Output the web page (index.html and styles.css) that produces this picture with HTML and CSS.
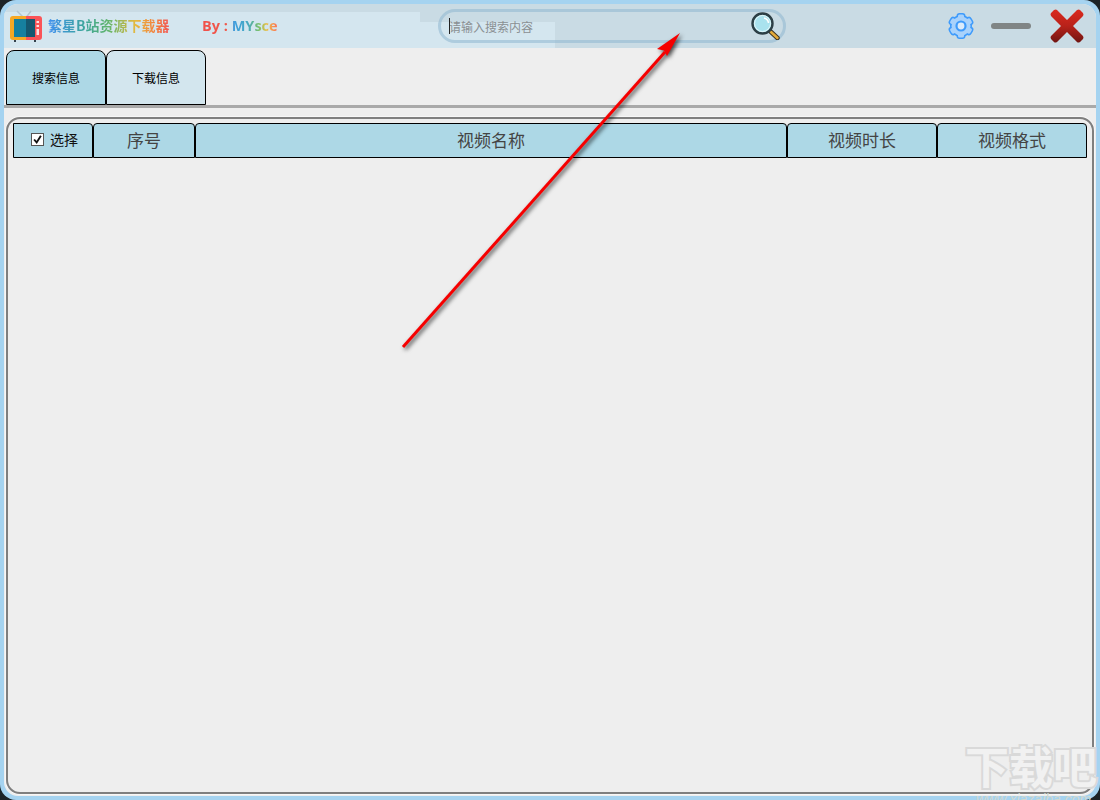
FILE: index.html
```html
<!DOCTYPE html>
<html lang="zh-CN">
<head>
<meta charset="utf-8">
<title>繁星B站资源下载器</title>
<link rel="stylesheet" href="styles.css">
</head>
<body>
<div class="window">
  <div class="app">
    <header class="topbar">
      <svg class="logo" viewBox="0 0 32 26" width="32" height="26" aria-hidden="true">
        <path d="M15 3 L7 -5 M15 3 L21 -5" stroke="#b4c6d0" stroke-width="1.500" fill="none"/>
        <rect x="4" y="23" width="2" height="3" fill="#33424c"/>
        <rect x="24" y="23" width="2" height="3" fill="#33424c"/>
        <path d="M16 0 H3 Q0 0 0 3 V21 Q0 24 3 24 H16 Z" fill="#f7a823"/>
        <path d="M16 0 H29 Q32 0 32 3 V21 Q32 24 29 24 H16 Z" fill="#fb5458"/>
        <rect x="4" y="3" width="12" height="18" fill="#16809f"/>
        <rect x="16" y="3" width="9" height="18" fill="#155870"/>
        <rect x="26.500" y="5" width="2.500" height="2" fill="#fde0e0"/>
        <rect x="26.500" y="9" width="2.500" height="2" fill="#fde0e0"/>
        <rect x="26.500" y="13" width="2.500" height="6" fill="#fde0e0"/>
      </svg>
      <div class="app-title">繁星B站资源下载器</div>
      <div class="author">By : MYsce</div>
      <div class="search">
        <input class="search-input" type="text" placeholder="请输入搜索内容">
        <svg class="search-icon" viewBox="0 0 29 28" width="29" height="28" aria-hidden="true">
          <path d="M19 19 L26.500 26" stroke="#3b3325" stroke-width="4.500" stroke-linecap="round"/>
          <path d="M20 20 L26.500 26" stroke="#e3a93a" stroke-width="2.500" stroke-linecap="round"/>
          <circle cx="11.500" cy="11.500" r="10" fill="#a9e2ee" stroke="#2d3f46" stroke-width="2.400"/>
          <circle cx="11.500" cy="11.500" r="8" fill="none" stroke="#e6f8fb" stroke-width="1"/>
          <path d="M13 6 Q17 7 17.500 11" stroke="#fff" stroke-width="1.500" fill="none"/>
        </svg>
      </div>
      <svg class="gear" viewBox="0 0 28 28" width="28" height="28" aria-hidden="true">
        <defs>
          <g id="gear-shape">
            <circle cx="14" cy="14" r="9.500"/>
            <rect x="11" y="2.500" width="6" height="23" rx="1.500"/>
            <rect x="11" y="2.500" width="6" height="23" rx="1.500" transform="rotate(60 14 14)"/>
            <rect x="11" y="2.500" width="6" height="23" rx="1.500" transform="rotate(120 14 14)"/>
          </g>
        </defs>
        <use href="#gear-shape" fill="#3f9bfb" stroke="#3f9bfb" stroke-width="3"/>
        <use href="#gear-shape" fill="#a9d2fb"/>
        <circle cx="14" cy="14" r="4.500" fill="#dcebfa" stroke="#3f9bfb" stroke-width="2.200"/>
      </svg>
      <div class="minimize"></div>
      <svg class="close" viewBox="0 0 34 34" width="34" height="34" aria-hidden="true">
        <defs>
          <linearGradient id="close-red" gradientUnits="userSpaceOnUse" x1="0" y1="0" x2="0" y2="34">
            <stop offset="0" stop-color="#dc2a1e"/>
            <stop offset="0.5" stop-color="#b8221a"/>
            <stop offset="1" stop-color="#6e1512"/>
          </linearGradient>
        </defs>
        <path d="M7 1 L17 11 L27 1 Q29 0 30 1 L33 4 Q34 6 33 7 L23 17 L33 27 Q34 29 33 30 L30 33 Q28 34 27 33 L17 23 L7 33 Q5 34 4 33 L1 30 Q0 28 1 27 L11 17 L1 7 Q0 5 1 4 L4 1 Q6 0 7 1 Z" fill="url(#close-red)"/>
      </svg>
    </header>

    <nav class="tabs">
      <div class="tab tab-active">搜索信息</div>
      <div class="tab">下载信息</div>
    </nav>
    <div class="divider"></div>

    <main class="panel">
      <div class="table-head">
        <div class="cell cell-check">
          <span class="checkbox">
            <svg viewBox="0 0 13 13" width="11" height="11" aria-hidden="true"><path d="M2.500 6.500 L5.500 10 L10.500 2" fill="none" stroke="#111" stroke-width="2.200"/></svg>
          </span>
          <span class="check-label">选择</span>
        </div>
        <div class="cell cell-index">序号</div>
        <div class="cell cell-name">视频名称</div>
        <div class="cell cell-time">视频时长</div>
        <div class="cell cell-format">视频格式</div>
      </div>
    </main>
  </div>
</div>

<svg class="arrow" viewBox="0 0 1100 800" width="1100" height="800" aria-hidden="true">
  <path d="M403 347 L665 52" stroke="#f60000" stroke-width="3" fill="none"/>
  <path d="M680 33 L657 49 L664 50.500 L667 56 Z" fill="#f60000"/>
</svg>

<div class="watermark">
  <div class="wm-main">下载吧</div>
  <div class="wm-url">www.xiazaiba.com</div>
</div>
</body>
</html>
```

FILE: styles.css
```css
* { box-sizing: border-box; }

html, body {
  margin: 0;
  height: 100%;
}

body {
  position: relative;
  overflow: hidden;
  background: #1c2327;
  font-family: "Noto Sans CJK SC", "Microsoft YaHei", sans-serif;
}

.window {
  height: 800px;
  padding: 4px;
  background: #a5d3f0;
  border-radius: 16px;
}

.app {
  display: flex;
  flex-direction: column;
  height: 100%;
  background: #eee;
  border-radius: 14px;
  overflow: hidden;
}

/* Top bar */
.topbar {
  display: flex;
  align-items: center;
  flex: none;
  height: 44px;
  background:
    linear-gradient(#d4e6ef, #d4e6ef) 0 18px / 551px 26px no-repeat,
    linear-gradient(#d4e6ef, #d4e6ef) 0 8px / 416px 36px no-repeat,
    #c9dbe4;
}

.logo {
  flex: none;
  margin-left: 6px;
  margin-top: 6px;
  overflow: visible;
}

.app-title {
  flex: none;
  width: 122px;
  margin-left: 6px;
  margin-top: -2px;
  font-size: 14px;
  font-weight: 700;
  line-height: 20px;
  white-space: nowrap;
  color: transparent;
  background: linear-gradient(90deg, #3f8ff0 0%, #3ba59b 30%, #63b56a 50%, #e7b93f 72%, #f5773d 90%, #f0555a 100%);
  -webkit-background-clip: text;
  background-clip: text;
}

.author {
  flex: none;
  width: 76px;
  margin-left: 32px;
  font-family: "Open Sans", "Noto Sans", sans-serif;
  font-size: 14.500px;
  font-weight: 700;
  line-height: 20px;
  white-space: nowrap;
  color: transparent;
  background: linear-gradient(90deg, #f0504a 0%, #ef5a4a 36%, #3f9fe0 42%, #45a8c0 60%, #7cc06a 75%, #e9c04a 85%, #f98a50 95%, #f96a60 100%);
  -webkit-background-clip: text;
  background-clip: text;
}

.search {
  position: relative;
  display: flex;
  align-items: center;
  flex: none;
  width: 348px;
  height: 34px;
  margin-left: 160px;
  padding: 0 3px 0 8px;
  border: 3px solid rgba(142, 183, 208, 0.55);
  border-radius: 17px;
}

.search::before {
  content: "";
  position: absolute;
  left: 8px;
  top: 6px;
  width: 1px;
  height: 16px;
  background: #222;
}

.search-input {
  flex: 1;
  min-width: 0;
  padding: 0;
  border: 0;
  outline: 0;
  background: transparent;
  font-family: inherit;
  font-size: 12px;
  color: #333;
}

.search-input::placeholder {
  color: #8a8f92;
  opacity: 1;
}

.search-icon {
  flex: none;
}

.gear {
  flex: none;
  margin-left: 161px;
}

.minimize {
  flex: none;
  width: 40px;
  height: 6px;
  margin-left: 16px;
  background: #808585;
  border-radius: 3px;
}

.close {
  flex: none;
  margin-left: 19px;
  margin-top: -1px;
}

/* Tabs */
.tabs {
  display: flex;
  flex: none;
  height: 55px;
  margin-top: 2px;
  padding-left: 2px;
}

.tab {
  display: flex;
  align-items: center;
  justify-content: center;
  width: 100px;
  padding-bottom: 1px;
  border: 1px solid #000;
  border-radius: 8px 8px 0 0;
  background: #d3e6ee;
  font-size: 12px;
  color: #000;
}

.tab-active {
  background: #add8e6;
}

.divider {
  flex: none;
  height: 3px;
  background: #a9a9a9;
}

/* Table panel */
.panel {
  flex: 1;
  margin: 9px 2px 2px;
  padding: 4px 5px;
  border: 2px solid #7f7f7f;
  border-radius: 14px;
  box-shadow: 0 0 0 1px #f7f7f7;
}

.table-head {
  display: flex;
  height: 35px;
}

.cell {
  display: flex;
  align-items: center;
  justify-content: center;
  flex: none;
  padding-bottom: 2px;
  border: 1px solid #000;
  border-radius: 4px 4px 0 0;
  background: #add8e6;
  font-size: 17px;
  color: #444;
}

.cell-check {
  width: 80px;
  border-top-left-radius: 0;
  padding: 0 14px 3px 17px;
  justify-content: flex-start;
}

.cell-index { width: 102px; }
.cell-name  { width: 592px; }
.cell-time  { width: 150px; }
.cell-format { width: 150px; }

.checkbox {
  display: flex;
  align-items: center;
  justify-content: center;
  flex: none;
  width: 13px;
  height: 13px;
  border: 1px solid #555;
  background: #fff;
}

.check-label {
  margin-left: 6px;
  font-size: 14px;
  color: #111;
  white-space: nowrap;
}

/* Annotation over the window */
.arrow {
  position: absolute;
  left: 0;
  top: 0;
  pointer-events: none;
  filter: drop-shadow(2px 2px 2px rgba(0, 0, 0, 0.7));
}

/* Corner watermark */
.watermark {
  position: absolute;
  left: 965px;
  top: 741px;
  width: 135px;
  pointer-events: none;
}

.wm-main {
  height: 50px;
  font-size: 44px;
  font-weight: 700;
  line-height: 48px;
  white-space: nowrap;
  color: #f1f1f1;
  -webkit-text-stroke: 4px #d9d9d9;
  paint-order: stroke fill;
}

.wm-url {
  padding-left: 11px;
  font-family: "Liberation Sans", sans-serif;
  font-size: 14px;
  font-style: italic;
  line-height: 16px;
  white-space: nowrap;
  color: #d0d8d0;
}
```
